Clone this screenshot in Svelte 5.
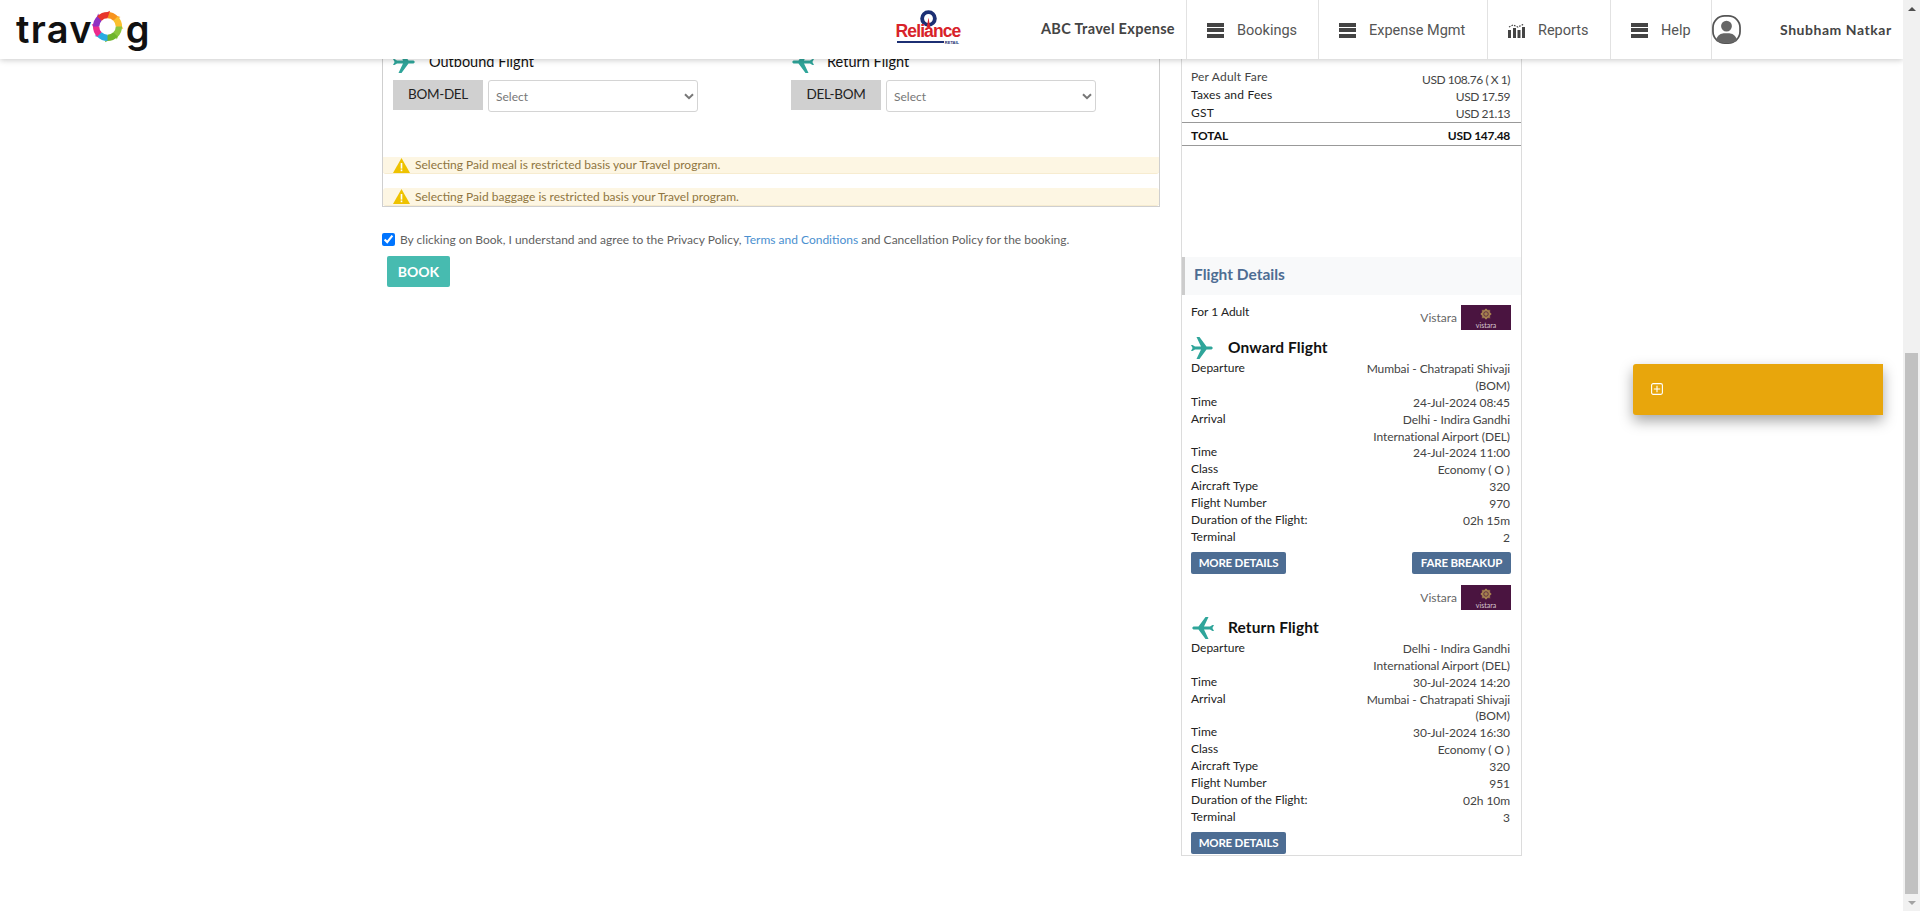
<script>
  const navItems = [
    { label: 'Bookings', icon: 'bars', width: 132 },
    { label: 'Expense Mgmt', icon: 'bars', width: 169 },
    { label: 'Reports', icon: 'chart', width: 123 },
    { label: 'Help', icon: 'bars', width: 101 }
  ];

  const fares = [
    ['Per Adult Fare', 'USD 108.76 ( X 1)'],
    ['Taxes and Fees', 'USD 17.59'],
    ['GST', 'USD 21.13']
  ];

  const mumbai = 'Mumbai - Chatrapati Shivaji\n(BOM)';
  const delhi = 'Delhi - Indira Gandhi\nInternational Airport (DEL)';

  const flights = [
    {
      title: 'Onward Flight',
      back: false,
      adults: true,
      rows: [
        ['Departure', mumbai],
        ['Time', '24-Jul-2024 08:45'],
        ['Arrival', delhi],
        ['Time', '24-Jul-2024 11:00'],
        ['Class', 'Economy ( O )'],
        ['Aircraft Type', '320'],
        ['Flight Number', '970'],
        ['Duration of the Flight:', '02h 15m'],
        ['Terminal', '2']
      ],
      fareBreakup: true
    },
    {
      title: 'Return Flight',
      back: true,
      adults: false,
      rows: [
        ['Departure', delhi],
        ['Time', '30-Jul-2024 14:20'],
        ['Arrival', mumbai],
        ['Time', '30-Jul-2024 16:30'],
        ['Class', 'Economy ( O )'],
        ['Aircraft Type', '320'],
        ['Flight Number', '951'],
        ['Duration of the Flight:', '02h 10m'],
        ['Terminal', '3']
      ],
      fareBreakup: false
    }
  ];

  const meals = [
    { title: 'Outbound Flight', route: 'BOM-DEL', back: false },
    { title: 'Return Flight', route: 'DEL-BOM', back: true }
  ];

  const notices = ['Selecting Paid meal', 'Selecting Paid baggage'];

  const ringColors = ['#f7931e', '#fbc02d', '#8cc63f', '#6fb52c', '#29abe2', '#ec2a8d', '#8e2fc2', '#e8352b'];

  // one pinwheel blade of the logo ring
  function blade(i) {
    const step = (Math.PI * 2) / ringColors.length;
    const a0 = i * step - Math.PI / 2;
    const a1 = a0 + step;
    const p = (r, a) => `${(r * Math.cos(a)).toFixed(2)} ${(r * Math.sin(a)).toFixed(2)}`;
    return `M${p(15, a0)} A15 15 0 0 1 ${p(15, a1)} L${p(16.5, a1 + 0.16)} L${p(8.5, a1)} A8.5 8.5 0 0 0 ${p(8.5, a0)} Z`;
  }
</script>

{#snippet plane(back)}
  <svg class="plane" class:back viewBox="0 0 23 22" aria-hidden="true">
    <path d="M0 8 L1.5 8 L4 9.5 L20.5 9.5 Q23 11 20.5 12.5 L4 12.5 L1.5 14 L0 14 L1.6 11 Z M5.5 0 L8.5 0 L15.5 9.5 L10 9.5 Z M5.5 22 L8.5 22 L15.5 12.5 L10 12.5 Z" />
  </svg>
{/snippet}

{#snippet vistara()}
  <div class="carrier">
    <span>Vistara</span>
    <div class="carrier-logo">
      <svg viewBox="0 0 16 16" aria-hidden="true">
        <path d="M8 1 L10 3.2 L13 3 L12.8 6 L15 8 L12.8 10 L13 13 L10 12.8 L8 15 L6 12.8 L3 13 L3.2 10 L1 8 L3.2 6 L3 3 L6 3.2 Z" />
        <circle cx="8" cy="8" r="2.6" />
      </svg>
      <small>vistara</small>
    </div>
  </div>
{/snippet}

<div class="screen">
  <div class="page">
    <header class="topbar">
      <div class="logo">
        <span>trav</span>
        <svg viewBox="-17 -17 34 34" aria-hidden="true">
          {#each ringColors as color, i}
            <path d={blade(i)} fill={color} />
          {/each}
        </svg>
        <span>g</span>
      </div>

      <div class="reliance">
        <svg viewBox="0 0 20 20" aria-hidden="true">
          <circle cx="10" cy="10" r="7.5" fill="none" stroke="#1c2f73" stroke-width="4.5" />
          <path d="M8 20 L10 9 L12 20 Z" fill="#d8232a" />
        </svg>
        <b>Reliance</b>
        <i><em>RETAIL</em></i>
      </div>

      <div class="company">ABC Travel Expense</div>

      <nav>
        {#each navItems as item}
          <div class="nav-item" style:width={item.width + 'px'}>
            {#if item.icon === 'bars'}
              <span class="bars"></span>
            {:else}
              <svg class="chart" viewBox="0 0 17 15" aria-hidden="true">
                <path d="M0 7h3v8H0zM5 5h3v10H5zM9.5 7h3v8h-3zM14 4h3v11h-3z" />
                <path d="M1 4l4-2 5 2 6-3" fill="none" stroke="#444" stroke-width="1.2" stroke-dasharray="1.6 1.2" />
              </svg>
            {/if}
            <span>{item.label}</span>
          </div>
        {/each}
      </nav>

      <div class="user">
        <svg viewBox="0 0 30 30" aria-hidden="true">
          <rect x="1" y="1" width="28" height="28" rx="12" fill="#fff" stroke="#555" stroke-width="1.8" />
          <circle cx="15" cy="11.5" r="5.6" fill="#666" />
          <path d="M4 27 Q5 20 12 19 L18 19 Q25 20 26 27 Q15 31 4 27 Z" fill="#666" />
        </svg>
        <span>Shubham Natkar</span>
      </div>
    </header>

    <div class="columns">
      <main class="left">
        <section class="card">
          <div class="meal-grid">
            {#each meals as meal}
              <div class="meal">
                <div class="meal-title">
                  {@render plane(meal.back)}
                  <span>{meal.title}</span>
                </div>
                <div class="meal-pick">
                  <span class="route">{meal.route}</span>
                  <div class="select-wrap">
                    <select>
                      <option>Select</option>
                    </select>
                    <svg viewBox="0 0 10 7" aria-hidden="true">
                      <path d="M1 1.2 L5 5.2 L9 1.2" fill="none" stroke="#777" stroke-width="2" />
                    </svg>
                  </div>
                </div>
              </div>
            {/each}
          </div>

          {#each notices as notice}
            <div class="notice">
              <svg viewBox="0 0 17 15" aria-hidden="true">
                <path d="M8.5 0 L17 15 L0 15 Z" fill="#eec200" />
                <rect x="7.7" y="5" width="1.6" height="5.6" fill="#fff" />
                <rect x="7.7" y="11.5" width="1.6" height="1.7" fill="#fff" />
              </svg>
              <span>{notice} is restricted basis your Travel program.</span>
            </div>
          {/each}
        </section>

        <label class="agree">
          <input type="checkbox" checked />
          <span>By clicking on Book, I understand and agree to the Privacy Policy, <a href="#terms">Terms and Conditions</a> and Cancellation Policy for the booking.</span>
        </label>

        <button class="book">BOOK</button>
      </main>

      <aside class="summary">
        <div class="fares">
          {#each fares as [name, value]}
            <div class="fare"><span>{name}</span><span>{value}</span></div>
          {/each}
        </div>
        <div class="total"><span>TOTAL</span><span>USD 147.48</span></div>

        <h3>Flight Details</h3>

        {#each flights as flight}
          <div class="flight">
            <div class="carrier-row">
              <span>{flight.adults ? 'For 1 Adult' : ''}</span>
              {@render vistara()}
            </div>
            <div class="flight-title">
              {@render plane(flight.back)}
              <span>{flight.title}</span>
            </div>
            <dl>
              {#each flight.rows as [name, value]}
                <dt>{name}</dt>
                <dd>{value}</dd>
              {/each}
            </dl>
            <div class="actions">
              <button>MORE DETAILS</button>
              {#if flight.fareBreakup}
                <button class="fare-btn">FARE BREAKUP</button>
              {/if}
            </div>
          </div>
        {/each}
      </aside>
    </div>

    <div class="float-box">
      <svg viewBox="0 0 12 12" aria-hidden="true">
        <rect x="0.6" y="0.6" width="10.8" height="10.8" rx="1.6" fill="none" stroke="#fff" stroke-width="1.1" />
        <path d="M6 2.8V9.2M2.8 6H9.2" stroke="#fff" stroke-width="1.1" />
      </svg>
    </div>
  </div>

  <div class="scrollbar">
    <span class="arrow up"></span>
    <div class="track"><div class="thumb"></div></div>
    <span class="arrow down"></span>
  </div>
</div>

<style>
  :global(body) {
    margin: 0;
    background: #fff;
    font-family: 'Lato', 'Open Sans', sans-serif;
    color: #222;
  }

  .screen {
    display: flex;
    height: 911px;
    overflow: hidden;
  }

  .page {
    position: relative;
    flex: 1;
    overflow: hidden;
  }

  /* header stays on top of the scrolled content */
  .topbar {
    position: absolute;
    top: 0;
    left: 0;
    right: 0;
    z-index: 5;
    height: 59px;
    display: flex;
    align-items: center;
    background: #fff;
    box-shadow: 0 1px 6px rgba(0, 0, 0, 0.22);
  }

  .logo {
    display: flex;
    align-items: center;
    width: 140px;
    margin-left: 16px;
    font-family: 'Inter', sans-serif;
    font-size: 38px;
    font-weight: 600;
    letter-spacing: 1.3px;
    color: #111;
    line-height: 1;
    padding-bottom: 2px;
  }

  .logo svg {
    width: 33px;
    height: 33px;
    flex: none;
    margin: -5px 2px 0 -2px;
  }

  .reliance {
    position: relative;
    margin-left: 740px;
    width: 64px;
    height: 48px;
    display: flex;
    flex-direction: column;
    align-items: center;
  }

  .reliance svg {
    width: 17px;
    height: 17px;
    margin-top: 4px;
  }

  .reliance b {
    font-family: 'Liberation Sans', sans-serif;
    font-size: 17.5px;
    line-height: 15px;
    letter-spacing: -0.9px;
    color: #d8232a;
    margin-top: -3px;
  }

  .reliance i {
    display: flex;
    align-items: center;
    width: 62px;
    margin-top: 1px;
    font-style: normal;
  }

  .reliance i::before {
    content: '';
    flex: 1;
    height: 2px;
    background: #1c2f73;
  }

  .reliance em {
    font: bold 4px 'Liberation Sans', sans-serif;
    color: #1c2f73;
    margin-left: 1px;
  }

  .company {
    margin-left: 81px;
    font-size: 14.5px;
    font-weight: 700;
    letter-spacing: 0.3px;
    color: #444;
    padding-bottom: 2px;
    white-space: nowrap;
  }

  nav {
    position: absolute;
    left: 1186px;
    top: 0;
    display: flex;
    height: 59px;
  }

  .nav-item {
    display: flex;
    align-items: center;
    gap: 13px;
    box-sizing: border-box;
    padding: 1px 0 0 20px;
    border-left: 1px solid #e2e2e2;
    font-family: 'Roboto', sans-serif;
    font-size: 14.5px;
    color: #555;
    white-space: nowrap;
  }

  .bars {
    width: 17px;
    height: 15px;
    flex: none;
    background: linear-gradient(#444 0 4px, transparent 4px 5.5px, #444 5.5px 9.5px, transparent 9.5px 11px, #444 11px);
  }

  .chart {
    width: 17px;
    height: 15px;
    flex: none;
    fill: #444;
  }

  .user {
    position: absolute;
    left: 1711px;
    right: 0;
    top: 0;
    height: 59px;
    display: flex;
    align-items: center;
    border-left: 1px solid #e2e2e2;
    font-size: 14px;
    font-weight: 700;
    letter-spacing: 0.55px;
    color: #444;
    white-space: nowrap;
  }

  .user svg {
    width: 29px;
    height: 29px;
    margin-right: 39px;
  }

  .columns {
    display: flex;
    align-items: flex-start;
    gap: 21px;
    padding-left: 382px;
  }

  .left {
    width: 778px;
    flex: none;
  }

  .card {
    box-sizing: border-box;
    padding-top: 51px;
    border: 1px solid #cfcfcf;
    border-top: 0;
    height: 207px;
  }

  .meal-grid {
    display: grid;
    grid-template-columns: 398px 1fr;
    padding-left: 10px;
    height: 106px;
  }

  .meal-title {
    display: flex;
    align-items: center;
    gap: 13px;
    height: 22px;
    margin-bottom: 7px;
    font-size: 14.5px;
    color: #111;
  }

  .meal-title span {
    margin-top: -2px;
  }

  .meal-pick {
    display: flex;
    align-items: flex-start;
    gap: 5px;
  }

  .route {
    width: 90px;
    height: 30px;
    line-height: 28px;
    text-align: center;
    background: #d0d0d0;
    font-size: 13.5px;
    letter-spacing: -0.3px;
    color: #222;
  }

  .select-wrap {
    position: relative;
    width: 210px;
    height: 32px;
  }

  select {
    appearance: none;
    box-sizing: border-box;
    width: 100%;
    height: 100%;
    padding: 0 7px;
    background: #fff;
    border: 1px solid #d4d4d4;
    border-radius: 3px;
    font: 12px 'Lato', sans-serif;
    color: #777;
  }

  .select-wrap svg {
    position: absolute;
    right: 4px;
    top: 13px;
    width: 10px;
    height: 7px;
  }

  .notice {
    display: flex;
    align-items: center;
    gap: 5px;
    box-sizing: border-box;
    height: 17px;
    padding-left: 10px;
    background: #fdf6e3;
    border-bottom: 1px solid #f7ecd0;
    border-radius: 0 0 3px 3px;
    font-size: 12px;
    color: #8f7540;
  }

  .notice + .notice {
    height: 18px;
    margin-top: 14px;
    border-radius: 3px;
  }

  .notice svg {
    width: 17px;
    height: 15px;
    flex: none;
  }

  .notice span {
    margin-top: -1px;
  }

  .agree {
    display: flex;
    align-items: center;
    gap: 5px;
    margin-top: 25px;
    font-size: 12px;
    color: #5f5f5f;
    white-space: nowrap;
  }

  .agree input {
    width: 13px;
    height: 13px;
    margin: 0;
  }

  .agree a {
    color: #4a90d0;
    text-decoration: none;
  }

  .book {
    display: block;
    width: 63px;
    height: 31px;
    margin: 9px 0 0 5px;
    padding: 0;
    border: 0;
    border-radius: 2px;
    background: #47bbb0;
    color: #fff;
    font: 700 14px 'Lato', sans-serif;
  }

  .summary {
    box-sizing: border-box;
    width: 341px;
    flex: none;
    padding-top: 70px;
    border: 1px solid #dcdcdc;
    border-top: 0;
    font-size: 12px;
    height: 856px;
  }

  .fare,
  .total {
    display: flex;
    justify-content: space-between;
    padding: 0 11px 0 9px;
    color: #222;
  }

  .fare {
    height: 17.3px;
    line-height: 16px;
  }

  .fare span:first-child {
    letter-spacing: 0.2px;
  }

  .fare span:last-child {
    padding-top: 1.5px;
    letter-spacing: -0.45px;
    color: #444;
  }

  .fare:first-child span:first-child {
    margin-top: -1px;
    color: #444;
  }

  .total {
    box-sizing: border-box;
    height: 24px;
    padding-top: 3px;
    line-height: 20px;
    border-top: 1px solid #999;
    border-bottom: 1px solid #999;
    font-weight: 700;
    color: #111;
  }

  .total span:last-child {
    letter-spacing: -0.3px;
  }

  h3 {
    margin: 111px 0 0;
    height: 38px;
    line-height: 34px;
    box-sizing: border-box;
    padding-left: 9px;
    background: #f8f9fa;
    border-left: 3px solid #ccc;
    font-size: 15.5px;
    font-weight: 700;
    color: #4e6d93;
  }

  .flight {
    padding: 10px 10px 0 9px;
  }

  .flight + .flight {
    padding-top: 11px;
  }

  .carrier-row {
    display: flex;
    justify-content: space-between;
    height: 25px;
    line-height: 13px;
  }

  .carrier {
    display: flex;
    align-items: center;
    gap: 4px;
    color: #666;
  }

  .carrier-logo {
    position: relative;
    width: 50px;
    height: 25px;
    background: #4a1440;
    display: flex;
    flex-direction: column;
    align-items: center;
  }

  .carrier-logo svg {
    width: 14px;
    height: 14px;
    margin-top: 2px;
    fill: #a5814f;
    stroke: #4a1440;
    stroke-width: 0.8;
  }

  .carrier-logo small {
    font-size: 7px;
    line-height: 8px;
    color: #d8c8d0;
  }

  .flight-title {
    display: flex;
    align-items: center;
    gap: 14px;
    height: 22px;
    margin-top: 7px;
    font-size: 15.5px;
    font-weight: 700;
    letter-spacing: 0.1px;
    color: #111;
  }

  .flight-title span {
    margin-top: -2px;
  }

  .plane {
    width: 23px;
    height: 22px;
    flex: none;
    fill: #2fa59a;
  }

  .plane.back {
    transform: scaleX(-1);
  }

  dl {
    display: grid;
    grid-template-columns: 130px 1fr;
    grid-auto-rows: min-content;
    margin: 2px 0 0;
    line-height: 16.9px;
  }

  dt {
    color: #222;
    margin-top: -1px;
  }

  dd {
    margin: 0 1px 0 0;
    text-align: right;
    white-space: pre-line;
    letter-spacing: -0.08px;
    color: #444;
  }

  .actions {
    display: flex;
    justify-content: space-between;
    margin-top: 5px;
  }

  .actions button {
    height: 22px;
    padding: 0;
    width: 95px;
    border: 0;
    border-radius: 2px;
    background: #4d6d93;
    color: #fff;
    font: 700 11.5px 'Lato', sans-serif;
    letter-spacing: -0.2px;
  }

  .actions .fare-btn {
    width: 99px;
  }

  /* floating yellow tab, over the page */
  .float-box {
    position: absolute;
    left: 1633px;
    top: 364px;
    width: 250px;
    height: 51px;
    display: flex;
    align-items: center;
    padding-left: 18px;
    box-sizing: border-box;
    background: #e8a60c;
    border-radius: 3px 0 0 3px;
    box-shadow: 0 6px 14px rgba(0, 0, 0, 0.35);
  }

  .float-box svg {
    width: 12px;
    height: 12px;
    margin-top: -2px;
  }

  .scrollbar {
    width: 17px;
    flex: none;
    display: flex;
    flex-direction: column;
    align-items: center;
    background: #f1f1f1;
  }

  .arrow {
    width: 0;
    height: 0;
    flex: none;
    border-left: 4px solid transparent;
    border-right: 4px solid transparent;
  }

  .arrow.up {
    margin-top: 7px;
    border-bottom: 4px solid #505050;
  }

  .arrow.down {
    margin: 7px 0 6px;
    border-top: 4px solid #a3a3a3;
  }

  .track {
    flex: 1;
    width: 100%;
    display: flex;
    flex-direction: column;
    justify-content: flex-end;
    align-items: center;
  }

  .thumb {
    width: 13px;
    height: 541px;
    background: #c1c1c1;
  }
</style>
